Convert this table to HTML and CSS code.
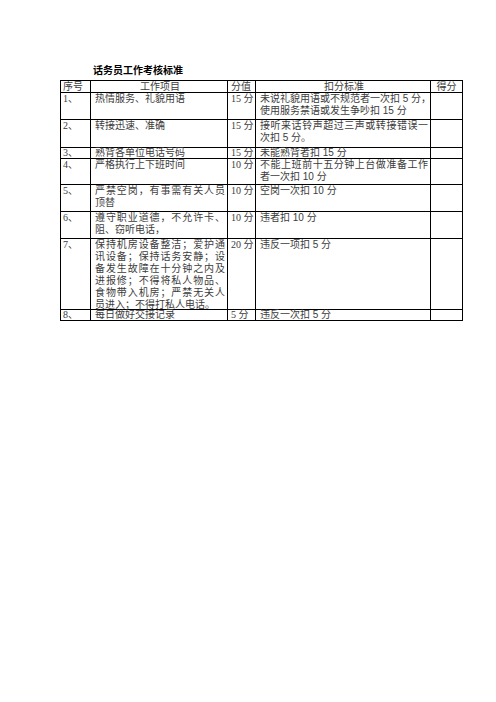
FILE: index.html
```html
<!DOCTYPE html>
<html lang="zh-CN">
<head>
<meta charset="utf-8">
<title>话务员工作考核标准</title>
<link rel="stylesheet" href="styles.css">
</head>
<body>
<div class="page">
  <h1 class="title">话务员工作考核标准</h1>
  <div class="sheet">
    <div class="cell c1 head left">序号</div>
    <div class="cell c2 head">工作项目</div>
    <div class="cell c3 head left">分值</div>
    <div class="cell c4 head">扣分标准</div>
    <div class="cell c5 head">得分</div>

    <div class="cell c1">1、</div>
    <div class="cell c2">热情服务、礼貌用语</div>
    <div class="cell c3">15 分</div>
    <div class="cell c4"><span class="ln full">未说礼貌用语或不规范者一次扣 5 分，</span><span class="ln">使用服务禁语或发生争吵扣 15 分</span></div>
    <div class="cell c5"></div>

    <div class="cell c1">2、</div>
    <div class="cell c2">转接迅速、准确</div>
    <div class="cell c3">15 分</div>
    <div class="cell c4"><span class="ln full">接听来话铃声超过三声或转接错误一</span><span class="ln">次扣 5 分。</span></div>
    <div class="cell c5"></div>

    <div class="cell c1 tight">3、</div>
    <div class="cell c2 tight">熟背各单位电话号码</div>
    <div class="cell c3 tight">15 分</div>
    <div class="cell c4 tight">未能熟背者扣 15 分</div>
    <div class="cell c5"></div>

    <div class="cell c1">4、</div>
    <div class="cell c2">严格执行上下班时间</div>
    <div class="cell c3">10 分</div>
    <div class="cell c4"><span class="ln full">不能上班前十五分钟上台做准备工作</span><span class="ln">者一次扣 10 分</span></div>
    <div class="cell c5"></div>

    <div class="cell c1">5、</div>
    <div class="cell c2"><span class="ln full">严禁空岗，有事需有关人员</span><span class="ln">顶替</span></div>
    <div class="cell c3">10 分</div>
    <div class="cell c4">空岗一次扣 10 分</div>
    <div class="cell c5"></div>

    <div class="cell c1">6、</div>
    <div class="cell c2"><span class="ln full">遵守职业道德，不允许卡、</span><span class="ln">阻、窃听电话，</span></div>
    <div class="cell c3">10 分</div>
    <div class="cell c4">违者扣 10 分</div>
    <div class="cell c5"></div>

    <div class="cell c1">7、</div>
    <div class="cell c2"><span class="ln full">保持机房设备整洁；爱护通</span><span class="ln full">讯设备；保持话务安静；设</span><span class="ln full">备发生故障在十分钟之内及</span><span class="ln full">进报修；不得将私人物品、</span><span class="ln full">食物带入机房；严禁无关人</span><span class="ln">员进入；不得打私人电话。</span></div>
    <div class="cell c3">20 分</div>
    <div class="cell c4">违反一项扣 5 分</div>
    <div class="cell c5"></div>

    <div class="cell c1 tight">8、</div>
    <div class="cell c2 tight">每日做好交接记录</div>
    <div class="cell c3 tight">5 分</div>
    <div class="cell c4 tight">违反一次扣 5 分</div>
    <div class="cell c5"></div>
  </div>
</div>
</body>
</html>
```

FILE: styles.css
```css
html, body {
  margin: 0;
  padding: 0;
  background: #ffffff;
}

.page {
  padding: 64px 0 0 60px;
}

.title {
  margin: 0 0 4px 33px;
  font-family: "Noto Sans CJK SC", sans-serif;
  font-size: 10px;
  line-height: 12px;
  font-weight: 700;
  color: #000;
}

.sheet {
  display: grid;
  width: 403px;
  box-sizing: border-box;
  grid-template-columns: 30px 137px 28px 175px 32px;
  grid-template-rows: 12px 27px 28px 11px 26px 27px 27px 71px 11px;
  border-top: 1px solid #000;
  border-left: 1px solid #000;
  font-family: "Liberation Serif", "Noto Sans CJK SC", serif;
  font-size: 10px;
  line-height: 12px;
  color: #3c3c3c;
}

.cell {
  box-sizing: border-box;
  border-right: 1px solid #000;
  border-bottom: 1px solid #000;
  overflow: visible;
  white-space: nowrap;
}

.c1 { padding: 0 0 0 2px; }
.c2 { padding: 0 2px 0 4px; }
.c3 { padding: 0 0 0 3px; }
.c4 {
  padding: 0 2px 0 4px;
  font-family: "Liberation Sans", "Noto Sans CJK SC", sans-serif;
}
.c5 { padding: 0; }

.head {
  line-height: 11px;
  text-align: center;
  font-family: "Liberation Serif", "Noto Sans CJK SC", serif;
}

.head.left {
  text-align: left;
}

.tight {
  line-height: 10px;
}

.ln {
  display: block;
  white-space: nowrap;
}

.ln.full {
  text-align: justify;
  text-align-last: justify;
}
```
